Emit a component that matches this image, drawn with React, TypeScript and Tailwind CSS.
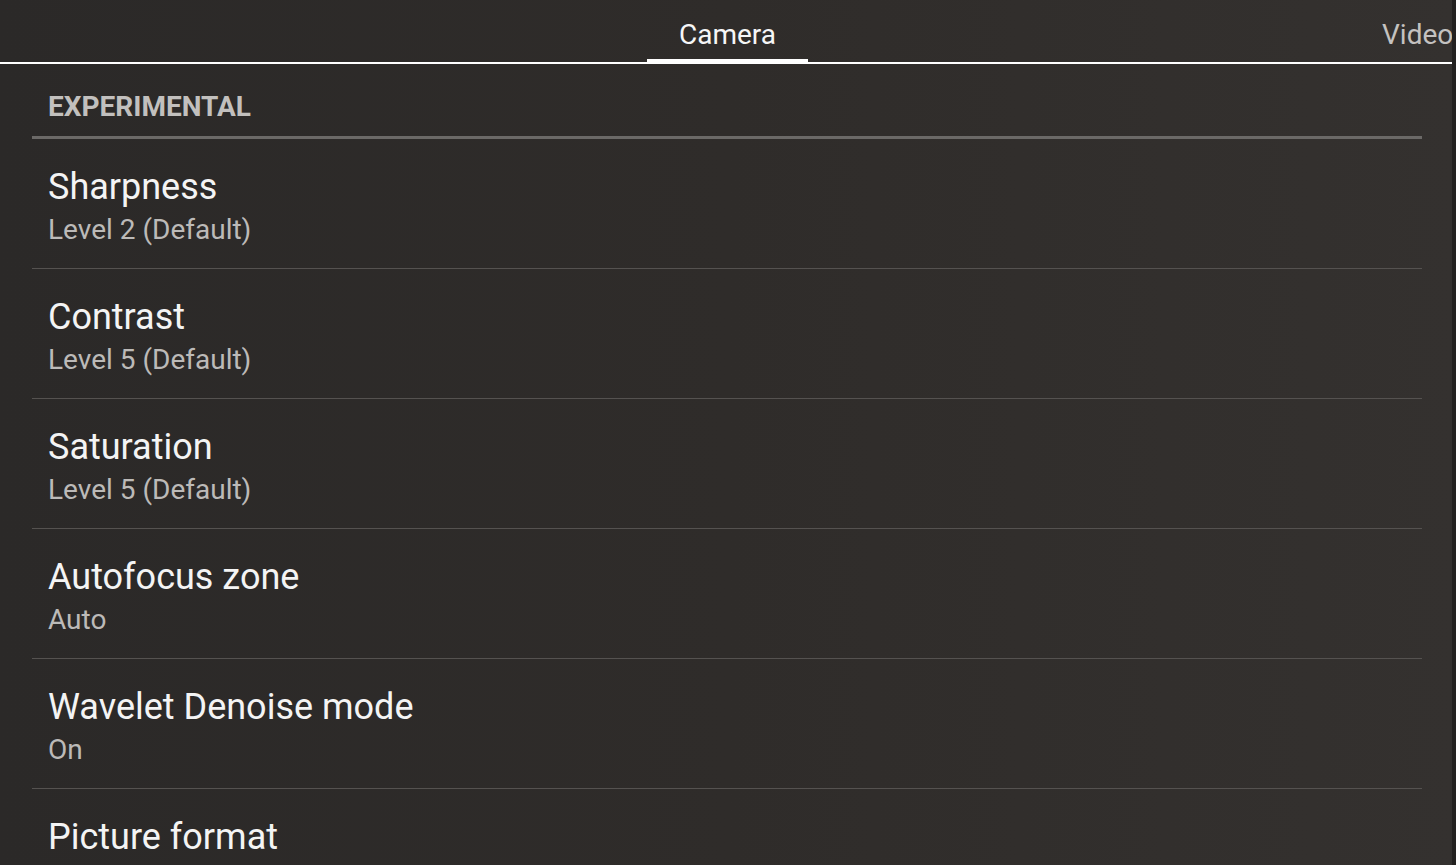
import React from 'react';

const ROWS = [
  { title: 'Sharpness', value: 'Level 2 (Default)' },
  { title: 'Contrast', value: 'Level 5 (Default)' },
  { title: 'Saturation', value: 'Level 5 (Default)' },
  { title: 'Autofocus zone', value: 'Auto' },
  { title: 'Wavelet Denoise mode', value: 'On' },
  { title: 'Picture format', value: '' },
];

const SettingRow = ({ title, value }: { title: string; value: string }) => (
  <div className="h-[130px] border-b border-[#555250] px-4 pt-[26px]">
    <div className="text-[36px] leading-[44px] text-[#f4f4f4]">{title}</div>
    {value && <div className="mt-[5px] text-[28px] leading-[32px] text-[#bcbab8]">{value}</div>}
  </div>
);

export default function App() {
  return (
    <div
      className="relative h-[865px] w-[1456px] overflow-hidden bg-gradient-to-r from-[#2b2928] via-[#2f2c2a] to-[#34312f]"
      style={{ fontFamily: 'Roboto, "Noto Sans", sans-serif' }}
    >
      {/* Tabs */}
      <div className="flex h-[62px] items-stretch">
        <div className="w-[647px]" />
        <div className="flex w-[161px] flex-col items-center">
          <div className="flex-1 pt-[18px] text-[28px] leading-[34px] text-[#f6f6f6]">Camera</div>
          <div className="h-[3px] w-full bg-white" />
        </div>
        <div className="ml-[574px] pt-[18px] text-[28px] leading-[34px] text-[#c4c2c0]">Video</div>
      </div>
      <div className="h-[2px] w-[1452px] bg-white" />

      {/* Settings list */}
      <div className="pl-[32px] pr-[34px]">
        <div className="flex h-[75px] items-end border-b-[3px] border-[#6b6967] px-4 pb-[13px]">
          <div className="text-[28px] font-bold leading-[32px] text-[#c2c0be]">EXPERIMENTAL</div>
        </div>
        {ROWS.map((r) => (
          <SettingRow key={r.title} title={r.title} value={r.value} />
        ))}
      </div>

      <div className="absolute right-0 top-0 h-full w-[4px] bg-[#232120]" />
    </div>
  );
}
